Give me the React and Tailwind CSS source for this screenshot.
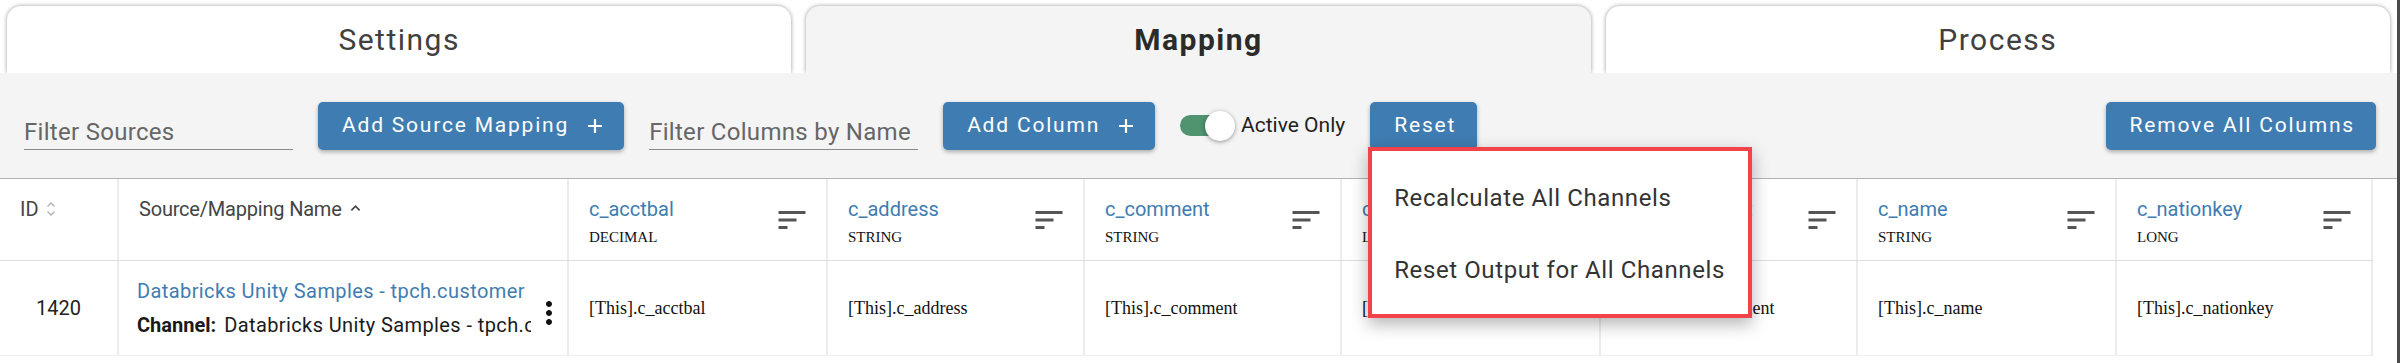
import React from 'react';

const columns = [
  { name: 'c_acctbal', type: 'DECIMAL', w: 'w-[259px]' },
  { name: 'c_address', type: 'STRING', w: 'w-[257px]' },
  { name: 'c_comment', type: 'STRING', w: 'w-[257px]' },
  { name: 'c_custkey', type: 'LONG', w: 'w-[259px]' },
  { name: 'c_mktsegment', type: 'STRING', w: 'w-[257px]' },
  { name: 'c_name', type: 'STRING', w: 'w-[259px]' },
  { name: 'c_nationkey', type: 'LONG', w: 'w-[256px]' },
];

function SortLines() {
  return (
    <svg viewBox="0 0 24 24" className="w-9 h-9 shrink-0 mt-[7px] fill-[#555555]">
      <path d="M3 18h6v-2H3v2zM3 6v2h18V6H3zm0 7h12v-2H3v2z" />
    </svg>
  );
}

function MoreVert() {
  return (
    <svg viewBox="0 0 24 24" className="w-9 h-9 fill-[#111111]">
      <path d="M12 8c1.1 0 2-.9 2-2s-.9-2-2-2-2 .9-2 2 .9 2 2 2zm0 2c-1.1 0-2 .9-2 2s.9 2 2 2 2-.9 2-2-.9-2-2-2zm0 6c-1.1 0-2 .9-2 2s.9 2 2 2 2-.9 2-2-.9-2-2-2z" />
    </svg>
  );
}

function Plus() {
  return (
    <svg viewBox="0 0 16 16" className="w-4 h-4 ml-[18px] stroke-white" strokeWidth="2.2" fill="none">
      <path d="M8 1v14M1 8h14" />
    </svg>
  );
}

function BlueButton({ children, plus }) {
  return (
    <button className="h-12 pl-6 pr-[21px] flex items-center rounded-[5px] bg-[#3f7cb1] text-white text-[21px] tracking-[1.8px] shadow-[0_2px_4px_rgba(0,0,0,0.3)] whitespace-nowrap">
      {children}
      {plus && <Plus />}
    </button>
  );
}

function FilterField({ label }) {
  return (
    <div className="w-[269px] h-[49px] flex items-end pb-[3px] border-b border-[#8a8a8a] text-[24px] leading-[28px] tracking-[0.3px] text-[#666666] whitespace-nowrap overflow-hidden">
      {label}
    </div>
  );
}

export default function App() {
  return (
    <div className="w-[2400px] h-[363px] bg-white overflow-hidden border-r-[3px] border-[#4a4a4a] font-['Roboto',sans-serif]">
      {/* Tabs */}
      <div className="flex gap-[15px] px-[7px] pt-[6px] h-[73px]">
        <div className="flex-1 rounded-t-[14px] bg-white shadow-[0_0_4px_rgba(0,0,0,0.4)] flex items-center justify-center text-[30px] tracking-[1.5px] text-[#404040]">
          Settings
        </div>
        <div className="flex-1 rounded-t-[14px] bg-[#f4f4f4] shadow-[0_0_4px_rgba(0,0,0,0.4)] flex items-center justify-center text-[30px] tracking-[1.5px] font-bold text-[#2b2b2b]">
          Mapping
        </div>
        <div className="flex-1 rounded-t-[14px] bg-white shadow-[0_0_4px_rgba(0,0,0,0.4)] flex items-center justify-center text-[30px] tracking-[1.5px] text-[#404040]">
          Process
        </div>
      </div>

      {/* Toolbar */}
      <div className="relative z-10 h-[106px] bg-[#f4f4f4] border-b border-[#b3b3b3] flex items-center gap-[25px] pl-6 pr-[21px]">
        <FilterField label="Filter Sources" />
        <BlueButton plus>Add Source Mapping</BlueButton>
        <FilterField label="Filter Columns by Name" />
        <BlueButton plus>Add Column</BlueButton>
        <div className="flex items-center">
          <div className="relative w-[51px] h-[21px] rounded-full bg-[#4f936f]">
            <div className="absolute left-[25px] top-[-4.5px] w-[30px] h-[30px] rounded-full bg-white shadow-[0_1px_4px_rgba(0,0,0,0.4)]" />
          </div>
          <span className="ml-[10px] text-[21px] text-[#1f1f1f]">Active Only</span>
        </div>
        <div className="relative">
          <BlueButton>Reset</BlueButton>
          <div className="absolute left-[-2px] top-[45px] w-[384px] h-[171px] bg-white border-4 border-[#f2434a] shadow-[0_6px_16px_rgba(0,0,0,0.3)] py-[11px] text-[24px] tracking-[0.6px] text-[#333333] whitespace-nowrap">
            <div className="h-[72px] flex items-center pl-[22px]">Recalculate All Channels</div>
            <div className="h-[72px] flex items-center pl-[22px]">Reset Output for All Channels</div>
          </div>
        </div>
        <div className="ml-auto">
          <BlueButton>Remove All Columns</BlueButton>
        </div>
      </div>

      {/* Table */}
      <div className="w-[2373px]">
        {/* Header row */}
        <div className="flex h-[82px] border-b border-[#dddddd]">
          <div className="w-[119px] border-r-2 border-[#ececec] pl-5 pt-4 flex items-start">
            <span className="text-[20px] leading-[28px] text-[#444444]">ID</span>
            <svg viewBox="0 0 10 16" className="w-[10px] h-4 ml-[7px] mt-[6px] stroke-[#b0b0b0] fill-none" strokeWidth="1.3">
              <path d="M1.5 5.5L5 2l3.5 3.5M1.5 10.5L5 14l3.5-3.5" />
            </svg>
          </div>
          <div className="w-[450px] border-r-2 border-[#ececec] pl-5 pt-4 flex items-start">
            <span className="text-[20px] leading-[28px] tracking-[-0.2px] text-[#444444]">Source/Mapping Name</span>
            <svg viewBox="0 0 12 8" className="w-[11px] h-[8px] ml-[8px] mt-[9px] stroke-[#444444] fill-none" strokeWidth="1.8">
              <path d="M1.5 6.5L6 2l4.5 4.5" />
            </svg>
          </div>
          {columns.map((c) => (
            <div key={c.name} className={`${c.w} border-r-2 border-[#ececec] pl-5 pr-4 pt-4 flex items-start justify-between`}>
              <div className="min-w-0 overflow-hidden whitespace-nowrap">
                <div className="text-[20px] leading-[28px] text-[#3f7cb1]">{c.name}</div>
                <div className="mt-1 text-[15px] leading-[20px] text-[#111111] font-['Liberation_Serif',serif]">{c.type}</div>
              </div>
              <SortLines />
            </div>
          ))}
        </div>

        {/* Data row */}
        <div className="flex h-[95px] border-b border-[#eeeeee]">
          <div className="w-[119px] border-r-2 border-[#ececec] flex items-center justify-center text-[20px] text-[#222222]">
            1420
          </div>
          <div className="w-[450px] border-r-2 border-[#ececec] pl-[18px] flex items-center">
            <div className="flex-1 min-w-0 overflow-hidden whitespace-nowrap text-[20px] leading-[34px] tracking-[0.4px]">
              <div className="text-[#3f7cb1]">Databricks Unity Samples - tpch.customer</div>
              <div className="text-[#1a1a1a]">
                <span className="font-bold tracking-normal mr-2">Channel:</span>Databricks Unity Samples - tpch.customer
              </div>
            </div>
            <div className="w-9 flex justify-center mt-[10px]">
              <MoreVert />
            </div>
          </div>
          {columns.map((c) => (
            <div key={c.name} className={`${c.w} border-r-2 border-[#ececec] pl-5 flex items-center overflow-hidden whitespace-nowrap text-[18px] text-[#111111] font-['Liberation_Serif',serif]`}>
              [This].{c.name}
            </div>
          ))}
        </div>
      </div>
    </div>
  );
}
